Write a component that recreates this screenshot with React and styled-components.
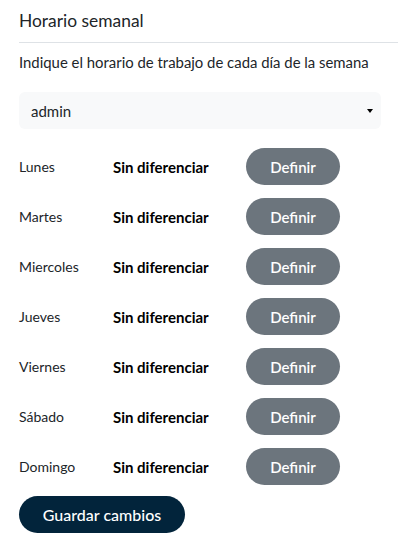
import React from "react";
import styled, { createGlobalStyle } from "styled-components";

const Global = createGlobalStyle`
  html, body { margin: 0; padding: 0; background: #fff; }
  body { font-family: "Lato", "Open Sans", sans-serif; color: #212529; }
  * { box-sizing: border-box; }
`;

const Page = styled.div`
  padding-left: 19px;
  width: 398px;
`;

const Header = styled.div`
  padding-top: 9px;
  height: 43px;
  border-bottom: 1px solid #dee2e6;
`;

const Title = styled.h1`
  margin: 0;
  font-size: 17.4px;
  line-height: 24px;
  font-weight: 400;
  color: #212529;
`;

const Body = styled.div`
  padding-right: 17px;
  display: flex;
  flex-direction: column;
`;

const Subtitle = styled.p`
  margin: 9px 0 0;
  font-size: 14.9px;
  line-height: 21px;
`;

const SelectBox = styled.div`
  margin-top: 19px;
  height: 37px;
  background: #f8f9fa;
  border-radius: 6px;
  display: flex;
  align-items: center;
  justify-content: space-between;
  padding: 0 8px 0 12px;
  font-size: 15px;
`;

const Caret = styled.span`
  width: 0;
  height: 0;
  border-left: 3.5px solid transparent;
  border-right: 3.5px solid transparent;
  border-top: 4px solid #000;
`;

const Rows = styled.div`
  margin-top: 19px;
  display: flex;
  flex-direction: column;
  gap: 13px;
`;

const Row = styled.div`
  display: grid;
  grid-template-columns: 94px 133px 94px;
  align-items: center;
  height: 37px;
`;

const Day = styled.span`
  font-size: 14px;
`;

const Mode = styled.span`
  font-size: 15px;
  font-weight: 700;
  color: #000;
`;

const PillButton = styled.button`
  height: 37px;
  border: none;
  border-radius: 19px;
  font-family: inherit;
  color: #fff;
  cursor: pointer;
  padding: 0;
  background: ${(p) => (p.$primary ? "#02243b" : "#6c757d")};
  font-size: ${(p) => (p.$primary ? "16px" : "15px")};
  font-weight: ${(p) => (p.$primary ? 500 : 600)};
  width: ${(p) => (p.$primary ? "166px" : "94px")};
`;

const Footer = styled.div`
  margin-top: 11px;
`;

const days = ["Lunes", "Martes", "Miercoles", "Jueves", "Viernes", "Sábado", "Domingo"];

export default function App() {
  return (
    <>
      <Global />
      <Page>
        <Header>
          <Title>Horario semanal</Title>
        </Header>
        <Body>
          <Subtitle>Indique el horario de trabajo de cada día de la semana</Subtitle>
          <SelectBox>
            <span>admin</span>
            <Caret />
          </SelectBox>
          <Rows>
            {days.map((d) => (
              <Row key={d}>
                <Day>{d}</Day>
                <Mode>Sin diferenciar</Mode>
                <PillButton>Definir</PillButton>
              </Row>
            ))}
          </Rows>
          <Footer>
            <PillButton $primary>Guardar cambios</PillButton>
          </Footer>
        </Body>
      </Page>
    </>
  );
}
